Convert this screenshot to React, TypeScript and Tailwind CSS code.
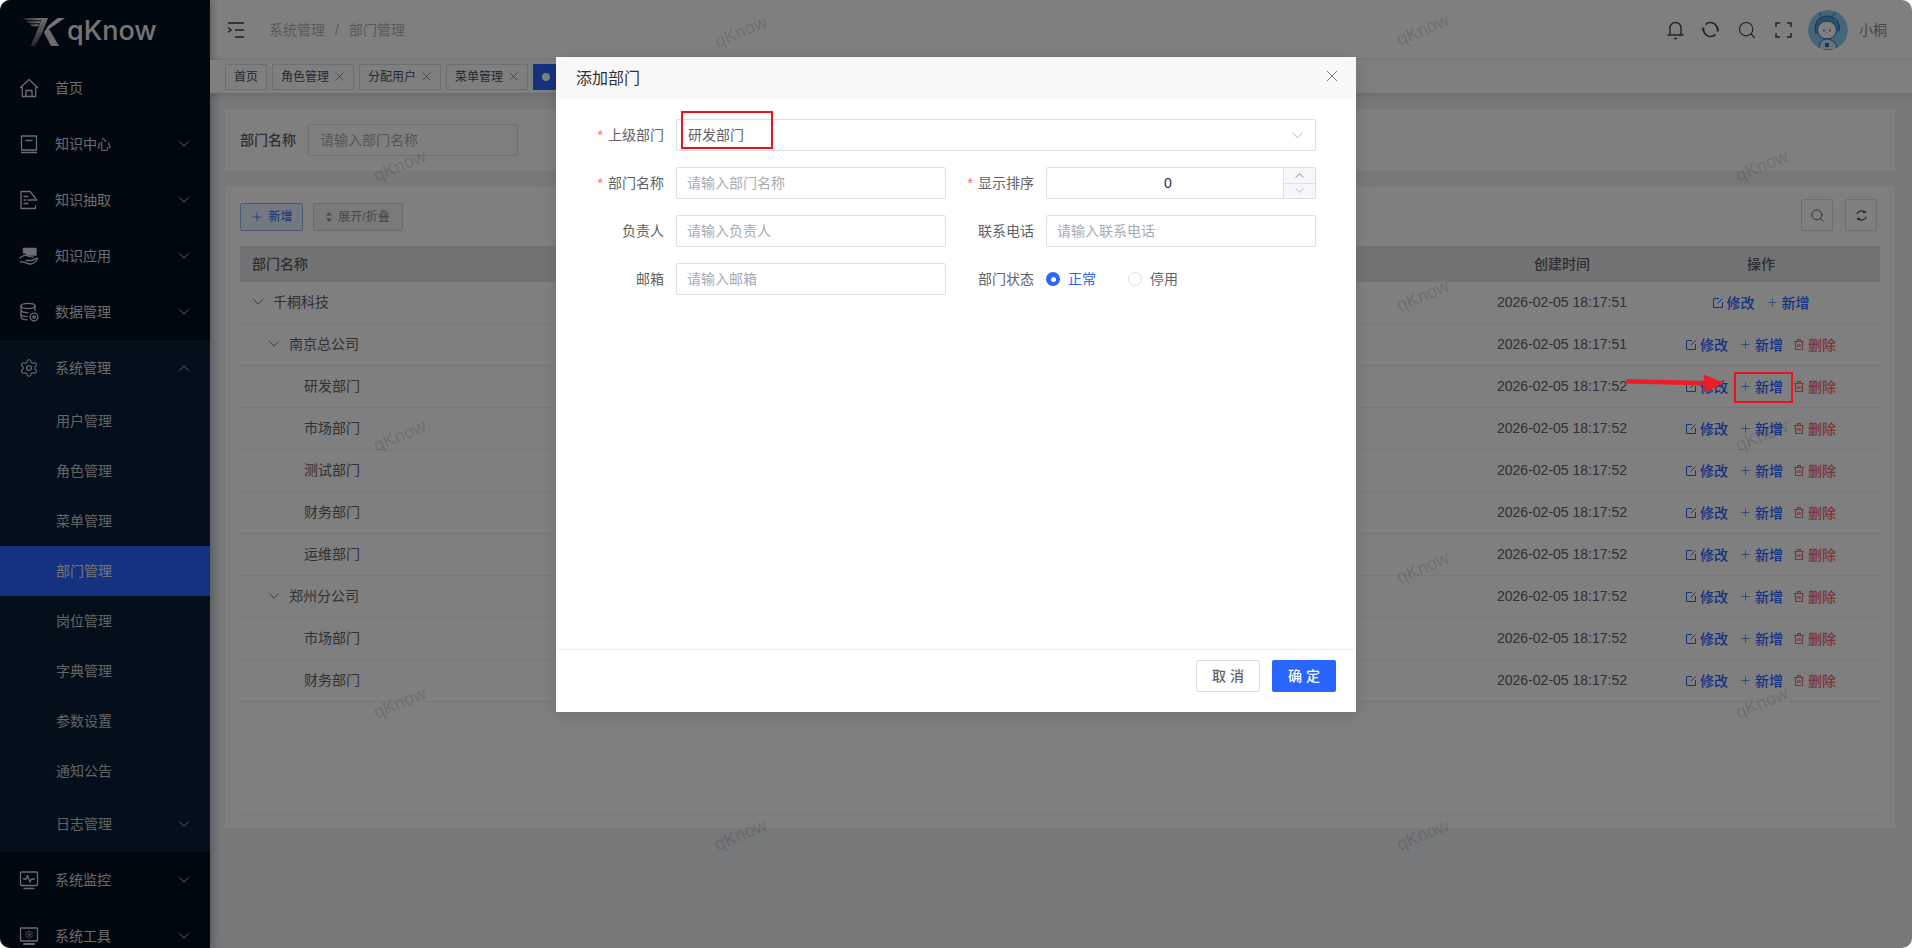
import { Plus, Search, Settings, X } from "lucide-react"
import type { ReactNode } from "react"

const blue = "text-[#2965ff]"

function Ico({ children, className = "w-5 h-5" }: { children: ReactNode; className?: string }) {
  return (
    <svg viewBox="0 0 20 20" fill="none" stroke="currentColor" strokeWidth="1.3" strokeLinecap="round" strokeLinejoin="round" className={className}>
      {children}
    </svg>
  )
}

function Chevron({ up, className = "w-[10px] h-[6px]" }: { up?: boolean; className?: string }) {
  return (
    <svg viewBox="0 0 10 6" fill="none" stroke="currentColor" strokeWidth="0.9" className={`shrink-0 ${className}`}>
      <path d={up ? "M.5 5.500 5 .8l4.500 4.700" : "M.5.500 5 5.200 9.500.5"} />
    </svg>
  )
}

const HomeIcon = () => (
  <Ico>
    <path d="M1.500 9.500 10 1.500l8.500 8h-1.800v9H3.300v-9z" />
    <path d="M7 18.500v-6h6v6" />
  </Ico>
)
const BookIcon = () => (
  <Ico>
    <path d="M2.500 16V2h15v14z" />
    <path d="M2.500 18.500h15M7 6.500h6" />
  </Ico>
)
const DocIcon = () => (
  <Ico>
    <path d="M16.500 8.500 11 1.500H2v17h14.500v-2.500" />
    <path d="M5 6.500h4M5 10h1.500M9 10h9M5 13.500h4" />
  </Ico>
)
const HandIcon = () => (
  <Ico>
    <path d="M4.500 7V2.500h12.500V9H8" fill="currentColor" />
    <path d="M1 12c3-3 6-3 8-2 2 1 5 1 5 1M1.500 16c4-1 6 2 10 2 3 0 6-3 7-6-3 1-4 2-6 2.500H7" />
  </Ico>
)
const DbIcon = () => (
  <Ico>
    <ellipse cx="9" cy="4" rx="7" ry="2.600" />
    <path d="M2 4v11c0 1.500 2.500 2.600 6 2.800M16 4v4.500M2 8c0 1.500 3 2.600 7 2.600M2 12c0 1.500 2.500 2.500 6 2.600" />
    <circle cx="15" cy="15" r="3.800" />
    <circle cx="15" cy="15" r="1.200" />
  </Ico>
)
const MonitorIcon = () => (
  <Ico>
    <rect x="1.500" y="2" width="17" height="13.500" rx="1" />
    <path d="M5 18.500h10" />
    <path d="M4.500 9h2.800l1.200-3.500 2.500 6.500 1.400-3h3" />
  </Ico>
)
const ToolIcon = () => (
  <Ico>
    <rect x="1.500" y="2" width="17" height="13" rx="0.5" />
    <path d="M5 18h10" strokeWidth="2" />
    <Settings x="5.500" y="4" width="9" height="9" strokeWidth="1.600" />
  </Ico>
)

function Logo() {
  return (
    <div className="flex items-center h-[60px] pl-[22px] pt-[3px] shrink-0">
      <svg width="44" height="28" viewBox="0 0 44 28" className="shrink-0">
        <defs>
          <linearGradient id="kfade" x1="0" y1="0" x2="0.2" y2="1">
            <stop offset="0" stopColor="#f5f5f5" />
            <stop offset="1" stopColor="#4a4a4a" />
          </linearGradient>
          <linearGradient id="kfade2" x1="0" y1="0" x2="1" y2="0">
            <stop offset="0" stopColor="#3d3d3d" />
            <stop offset="1" stopColor="#f5f5f5" />
          </linearGradient>
        </defs>
        <path d="M0 0h20l-1 2.200H4zM4 3.200h14.500l-1 2H7zM8 6.200h9l-1 2h-6z" fill="url(#kfade2)" />
        <path d="M20 0h6l-5 13.500L13 28H8.500L15 13z" fill="url(#kfade)" />
        <path d="M22 14.500 43 0h-7.500L26 8z" fill="#e6e6e6" />
        <path d="M26 9 37 28h-8l-7-13.500z" fill="#d8d8d8" />
      </svg>
      <span className="font-['Inter',sans-serif] text-[27px] leading-none font-medium text-[#e8e8e8] ml-[1px] -mt-[2px]">qKnow</span>
    </div>
  )
}

function MenuItem({ icon, label, open, noArrow }: { icon: ReactNode; label: string; open?: boolean; noArrow?: boolean }) {
  return (
    <div className="h-14 shrink-0 flex items-center pl-[19px] pr-[21px] text-[#d8d8d8]">
      <span className="w-[36px] shrink-0">{icon}</span>
      <span className="flex-1 text-sm">{label}</span>
      {!noArrow && <Chevron up={open} />}
    </div>
  )
}

function SubItem({ label, active }: { label: string; active?: boolean }) {
  return (
    <div className={`h-[50px] flex items-center pl-[56px] text-sm ${active ? "bg-[#2965ff] text-[#e8e8e8]" : "text-[#c8c8c8]"}`}>{label}</div>
  )
}

function Sidebar() {
  return (
    <aside className="relative w-[210px] h-full shrink-0 flex flex-col overflow-hidden bg-[#02101f] shadow-[3px_0_8px_rgba(0,0,0,0.25)]">
      <Logo />
      <MenuItem icon={<HomeIcon />} label="首页" noArrow />
      <MenuItem icon={<BookIcon />} label="知识中心" />
      <MenuItem icon={<DocIcon />} label="知识抽取" />
      <MenuItem icon={<HandIcon />} label="知识应用" />
      <MenuItem icon={<DbIcon />} label="数据管理" />
      <div className="bg-[#0a1e36] shrink-0">
        <MenuItem icon={<Settings className="w-5 h-5" strokeWidth={1.3} />} label="系统管理" open />
        {["用户管理", "角色管理", "菜单管理"].map((s) => (
          <SubItem key={s} label={s} />
        ))}
        <SubItem label="部门管理" active />
        {["岗位管理", "字典管理", "参数设置", "通知公告"].map((s) => (
          <SubItem key={s} label={s} />
        ))}
        <div className="h-14 flex items-center pl-[56px] pr-[21px] text-[#c8c8c8]">
          <span className="flex-1 text-sm">日志管理</span>
          <Chevron />
        </div>
      </div>
      <MenuItem icon={<MonitorIcon />} label="系统监控" />
      <MenuItem icon={<ToolIcon />} label="系统工具" />
    </aside>
  )
}

function Avatar() {
  return (
    <svg width="40" height="40" viewBox="0 0 40 40" className="rounded-full">
      <circle cx="20" cy="20" r="20" fill="#8ccaf0" />
      <path d="M8 24c-3-10 2-18 11-18 9 0 14 7 12 15" fill="#4f9fe0" stroke="#2a6cb0" strokeWidth="1" />
      <path d="M13 6c-1-2-1-3-2-3M25 6c1-2 2-3 3-3" stroke="#2a6cb0" strokeWidth="1" fill="none" />
      <ellipse cx="19" cy="20" rx="9.500" ry="9" fill="#fff" stroke="#2a6cb0" strokeWidth="1" />
      <circle cx="16" cy="20.500" r="0.9" fill="#2a6cb0" />
      <circle cx="22" cy="20.500" r="0.9" fill="#2a6cb0" />
      <path d="M18.500 23h1" stroke="#2a6cb0" />
      <path d="M11 40c0-7 3-11 8-11s10 4 10 11z" fill="#cfe6f7" stroke="#2a6cb0" strokeWidth="1" />
      <rect x="17" y="33" width="4" height="4" fill="#2a6cb0" />
    </svg>
  )
}

function Topbar() {
  return (
    <header className="h-[60px] shrink-0 bg-white border-b border-[#f2f2f2] flex items-center pl-[17px] pr-[25px]">
      <svg width="18" height="16" viewBox="0 0 18 16" fill="none" stroke="#3f3f3f" strokeWidth="1.400" className="shrink-0">
        <path d="M1 1h16M8 8h9M8 15h9M1 5.500 4 8l-3 2.500" />
      </svg>
      <nav className="flex items-center text-sm ml-[24px] text-[#b4b4b4]">
        <span>系统管理</span>
        <span className="mx-[10px]">/</span>
        <span>部门管理</span>
      </nav>
      <div className="ml-auto flex items-center text-[#444]">
        <div className="flex items-center gap-[18px]">
          <svg width="17" height="20" viewBox="0 0 17 20" fill="none" stroke="currentColor" strokeWidth="1.400">
            <path d="M0.5 15h16M3 15V8a5.500 5.500 0 0 1 11 0v7M7 18.500h3" />
          </svg>
          <svg width="17" height="17" viewBox="0 0 17 17" fill="none" stroke="currentColor" strokeWidth="1.500">
            <path d="M14.500 5A7 7 0 0 0 3.500 3.600M2.500 12a7 7 0 0 0 11 1.400" />
            <path d="M1.500 6.500a7 7 0 0 0 1 5.500M15.500 10.500a7 7 0 0 0-1-5.500" strokeWidth="2" />
          </svg>
          <Search className="w-[20px] h-[20px]" strokeWidth={1.400} />
          <svg width="17" height="16" viewBox="0 0 17 16" fill="none" stroke="currentColor" strokeWidth="1.500">
            <path d="M1 5V1h4M12 1h4v4M16 11v4h-4M5 15H1v-4" />
          </svg>
        </div>
        <span className="ml-[16px]"><Avatar /></span>
        <span className="ml-[11px] text-sm text-[#8f8f8f]">小桐</span>
      </div>
    </header>
  )
}

function Tag({ label, close, active }: { label?: string; close?: boolean; active?: boolean }) {
  return (
    <div className={`h-[26px] flex items-center gap-[3px] text-xs border ${active ? "bg-[#2965ff] border-[#2965ff] w-[60px] px-[8px]" : "bg-white border-[#d8dce5] text-[#495060]"} ${close ? "pl-[8px] pr-[6px]" : "px-[8px]"}`}>
      {active && <span className="w-2 h-2 rounded-full bg-white" />}
      {label}
      {close && <X className="w-[15px] h-[15px]" strokeWidth={1} />}
    </div>
  )
}

function Tags() {
  return (
    <div className="h-[33px] shrink-0 bg-white flex items-center gap-[5px] pl-[15px] shadow-[0_2px_6px_rgba(0,0,0,0.12)] relative">
      <Tag label="首页" />
      <Tag label="角色管理" close />
      <Tag label="分配用户" close />
      <Tag label="菜单管理" close />
      <Tag active />
    </div>
  )
}

type Row = { name: string; level: number; parent?: boolean; time: string; root?: boolean }

const rows: Row[] = [
  { name: "千桐科技", level: 0, parent: true, root: true, time: "2026-02-05 18:17:51" },
  { name: "南京总公司", level: 1, parent: true, time: "2026-02-05 18:17:51" },
  { name: "研发部门", level: 2, time: "2026-02-05 18:17:52" },
  { name: "市场部门", level: 2, time: "2026-02-05 18:17:52" },
  { name: "测试部门", level: 2, time: "2026-02-05 18:17:52" },
  { name: "财务部门", level: 2, time: "2026-02-05 18:17:52" },
  { name: "运维部门", level: 2, time: "2026-02-05 18:17:52" },
  { name: "郑州分公司", level: 1, parent: true, time: "2026-02-05 18:17:52" },
  { name: "市场部门", level: 2, time: "2026-02-05 18:17:52" },
  { name: "财务部门", level: 2, time: "2026-02-05 18:17:52" },
]

function EditIcon() {
  return (
    <svg width="10" height="10" viewBox="0 0 10 10" fill="none" stroke="currentColor" strokeWidth="1" className="shrink-0">
      <path d="M6 .5H.5v9h9V4M4.500 5.500 9.500.5" />
    </svg>
  )
}

function TrashIcon() {
  return (
    <svg width="10" height="11" viewBox="0 0 10 11" fill="none" stroke="currentColor" strokeWidth="1.200" className="shrink-0">
      <path d="M0 2.500h10M1.500 2.500v8h7v-8M3.500 2.500V.6h3v1.900M4 5v3M6 5v3" />
    </svg>
  )
}

function Actions({ root }: { root?: boolean }) {
  return (
    <div className="flex justify-center text-sm font-medium pt-[1px]">
      <span className={`${blue} flex items-center w-[55px]`}>
        <EditIcon />
        <span className="ml-[4px]">修改</span>
      </span>
      <span className={`${blue} flex items-center ${root ? "" : "w-[53px]"}`}>
        <Plus className="w-[13px] h-[13px] -ml-[2px] -mr-[2px]" strokeWidth={1.200} />
        <span className="ml-[5px]">新增</span>
      </span>
      {!root && (
        <span className="text-[#f56c6c] flex items-center">
          <TrashIcon />
          <span className="ml-[4px]">删除</span>
        </span>
      )}
    </div>
  )
}

function TableRow({ row }: { row: Row }) {
  const pad = row.level === 0 ? "pl-[12px]" : row.level === 1 ? "pl-[28px]" : "pl-[64px]"
  return (
    <div className="h-[42px] pb-[1px] flex items-center border-b border-[#ebeef5] text-sm text-[#606266]">
      <div className={`flex-1 flex items-center ${pad}`}>
        {row.parent && <Chevron className="w-[10px] h-[6px] mr-[10px] ml-[1px] text-[#606266]" />}
        {row.name}
      </div>
      <div className="w-[160px] text-center">{row.time}</div>
      <div className="w-[238px]">
        <Actions root={row.root} />
      </div>
    </div>
  )
}

function Content() {
  return (
    <main className="flex-1 min-h-0 bg-[#edf0f4] pt-[16px] pl-[15px] pr-[17px] flex flex-col gap-[15px]">
      <section className="bg-white h-[62px] shrink-0 flex items-center pl-[15px] text-sm">
        <span className="text-[#606266] font-medium">部门名称</span>
        <input readOnly placeholder="请输入部门名称" className="ml-[12px] w-[210px] h-8 px-[11px] border border-[#dcdfe6] rounded-[2px] placeholder:text-[#a8abb2] outline-none" />
      </section>
      <section className="bg-white h-[642px] shrink-0 px-[15px] pt-[13px] flex flex-col">
        <div className="flex items-end gap-[10px] h-[32px] text-xs shrink-0">
          <div className="h-7 w-[63px] flex items-center justify-center gap-[4px] rounded-[2px] border border-[#94b2ff] bg-[#e9f0ff] text-[#2965ff]">
            <Plus className="w-[14px] h-[14px]" strokeWidth={1.300} />
            新增
          </div>
          <div className="h-7 w-[90px] flex items-center justify-center gap-[6px] rounded-[2px] border border-[#d3d4d6] bg-[#f4f4f5] text-[#909399]">
            <svg width="6" height="10" viewBox="0 0 6 10" fill="currentColor"><path d="M3 0l3 3.500H0zM3 10 0 6.500h6z" /></svg>
            展开/折叠
          </div>
          <div className="ml-auto flex gap-[12px] mr-[3px]">
            <div className="w-8 h-8 flex items-center justify-center border border-[#dcdfe6] rounded-[2px] text-[#444]">
              <Search className="w-[15px] h-[15px]" strokeWidth={1.300} />
            </div>
            <div className="w-8 h-8 flex items-center justify-center border border-[#dcdfe6] rounded-[2px] text-[#444]">
              <svg width="11" height="11" viewBox="0 0 13 13" fill="none" stroke="currentColor" strokeWidth="1.300">
                <path d="M1 5a5.500 5.500 0 0 1 9.500-2M12 8a5.500 5.500 0 0 1-9.500 2M10.800.800v2.500H8.300M2.200 12.200V9.700h2.500" />
              </svg>
            </div>
          </div>
        </div>
        <div className="h-9 mt-[15px] shrink-0 flex items-center bg-[#e6e7eb] text-sm font-medium text-[#5c5c60]">
          <div className="flex-1 pl-[12px]">部门名称</div>
          <div className="w-[160px] text-center">创建时间</div>
          <div className="w-[238px] text-center">操作</div>
        </div>
        {rows.map((r, i) => (
          <TableRow key={i} row={r} />
        ))}
        <div className="h-[113px] shrink-0 border-b border-[#ebeef5]" />
      </section>
    </main>
  )
}

const marks = [
  [400, 166], [400, 436], [400, 703],
  [741, 32], [741, 835],
  [1423, 30], [1423, 296], [1423, 568], [1423, 835],
  [1762, 166], [1762, 436], [1762, 703],
]

function Watermarks() {
  return (
    <>
      {marks.map(([x, y]) => (
        <span
          key={`${x}-${y}`}
          className="absolute pointer-events-none -translate-x-1/2 -translate-y-1/2 -rotate-[23deg] text-[18px] text-[#00000026]"
          style={{ left: x, top: y }}
        >
          qKnow
        </span>
      ))}
    </>
  )
}

function Field({ label, required, children, className = "" }: { label: string; required?: boolean; children: ReactNode; className?: string }) {
  return (
    <div className={`flex items-center h-8 ${className}`}>
      <label className="w-[100px] shrink-0 pr-[12px] text-right text-sm text-[#606266]">
        {required && <span className="text-[#f56c6c] mr-[5px]">*</span>}
        {label}
      </label>
      <div className="flex-1 h-full relative">{children}</div>
    </div>
  )
}

const inputCls = "w-full h-full px-[10px] border border-[#dcdfe6] rounded-[2px] text-sm placeholder:text-[#a8abb2] outline-none"

function Dialog() {
  return (
    <div className="w-[800px] h-[655px] bg-white flex flex-col shadow-[0_4px_16px_rgba(0,0,0,0.12)]">
      <div className="h-[42px] shrink-0 bg-[#f8f8f8] flex items-center justify-between pl-[20px] pr-[14px]">
        <span className="text-base text-[#303133] mt-[2px]">添加部门</span>
        <X className="w-[20px] h-[20px] text-[#606266] -mt-[5px]" strokeWidth={1} />
      </div>
      <div className="flex-1 pt-[20px] pl-[20px] pr-[40px] grid grid-cols-2 gap-y-[16px] content-start">
        <Field label="上级部门" required className="col-span-2">
          <div className="w-full h-full flex items-center justify-between pl-[11px] pr-[12px] border border-[#dcdfe6] rounded-[2px] text-sm text-[#606266]">
            研发部门
            <Chevron className="w-[11px] h-[7px] text-[#b4b7bd]" />
          </div>
          <div className="absolute left-[5px] -top-[8px] w-[92px] h-[38px] border-2 border-[#e8141f]" />
        </Field>
        <Field label="部门名称" required>
          <input readOnly placeholder="请输入部门名称" className={inputCls} />
        </Field>
        <Field label="显示排序" required>
          <div className="w-full h-full flex border border-[#dcdfe6] rounded-[2px] text-sm overflow-hidden">
            <div className="flex-1 flex items-center justify-center text-[#303133] pl-[6px]">0</div>
            <div className="w-[32px] flex flex-col border-l border-[#dcdfe6] bg-[#f5f7fa]">
              <div className="flex-1 flex items-center justify-center border-b border-[#dcdfe6] text-[#606266]">
                <Chevron up className="w-[9px] h-[5px]" />
              </div>
              <div className="flex-1 flex items-center justify-center text-[#a8abb2]">
                <Chevron className="w-[9px] h-[5px]" />
              </div>
            </div>
          </div>
        </Field>
        <Field label="负责人">
          <input readOnly placeholder="请输入负责人" className={inputCls} />
        </Field>
        <Field label="联系电话">
          <input readOnly placeholder="请输入联系电话" className={inputCls} />
        </Field>
        <Field label="邮箱">
          <input readOnly placeholder="请输入邮箱" className={inputCls} />
        </Field>
        <Field label="部门状态">
          <div className="h-full flex items-center text-sm">
            <span className="w-[14px] h-[14px] rounded-full bg-[#2965ff] flex items-center justify-center">
              <span className="w-[5px] h-[5px] rounded-full bg-white" />
            </span>
            <span className={`${blue} ml-[8px]`}>正常</span>
            <span className="ml-[32px] w-[14px] h-[14px] rounded-full border border-[#dcdfe6]" />
            <span className="ml-[8px] text-[#606266]">停用</span>
          </div>
        </Field>
      </div>
      <div className="h-[63px] shrink-0 border-t border-[#ebeef5] flex items-center justify-end gap-[12px] pr-[20px] pb-[10px] text-sm">
        <div className="w-16 h-8 flex items-center justify-center border border-[#dcdfe6] rounded-[2px] text-[#606266] font-medium whitespace-pre">取 消</div>
        <div className="w-16 h-8 flex items-center justify-center rounded-[2px] bg-[#2965ff] text-white font-medium whitespace-pre">确 定</div>
      </div>
    </div>
  )
}

export default function App() {
  return (
    <div className="relative w-[1912px] h-[948px] overflow-hidden bg-white font-['Liberation_Sans','Noto_Sans_CJK_SC',sans-serif]">
      <div className="w-full h-full rounded-[10px] overflow-hidden flex">
        <Sidebar />
        <div className="flex-1 min-w-0 flex flex-col">
          <Topbar />
          <Tags />
          <Content />
        </div>
      </div>
      <Watermarks />
      <div className="absolute inset-0 rounded-[10px] bg-black/50 flex justify-center pt-[57px]">
        <Dialog />
      </div>
      {/* annotation on top of the dimmed table */}
      <div className="absolute left-[1734px] top-[372px] w-[59px] h-[31px] border-2 border-[#e8141f]" />
      <svg className="absolute left-[1625px] top-[372px]" width="102" height="22" viewBox="0 0 102 22">
        <path d="M2 7.500 80 9.500 79 3 98 11 80 20 80 13 2 11z" fill="#ee1c25" stroke="#ee1c25" strokeWidth="1" strokeLinejoin="round" />
      </svg>
    </div>
  )
}
